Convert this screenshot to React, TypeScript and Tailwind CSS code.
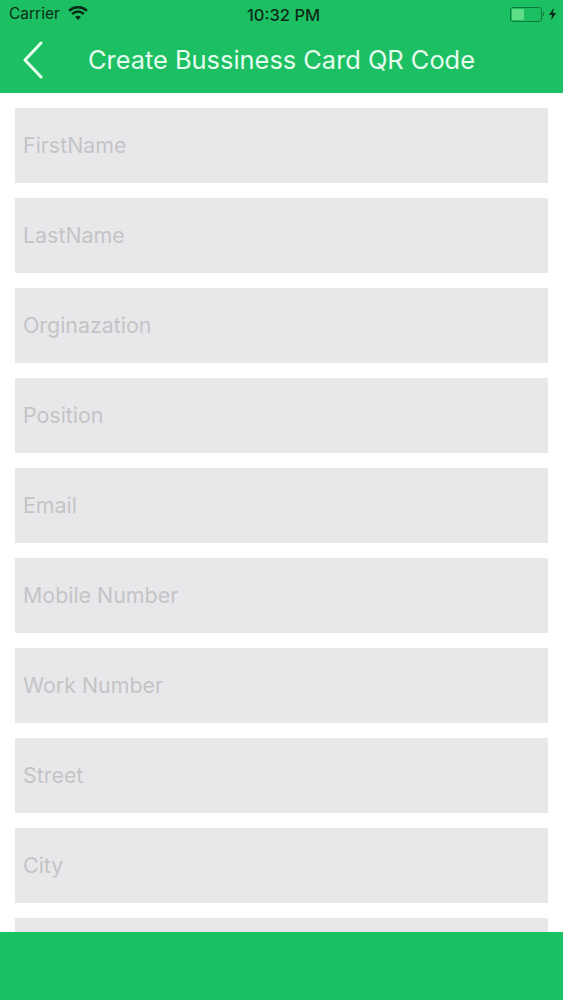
const fields = [
  "FirstName",
  "LastName",
  "Orginazation",
  "Position",
  "Email",
  "Mobile Number",
  "Work Number",
  "Street",
  "City",
  "",
]

function WifiIcon() {
  return (
    <svg width="20" height="15" viewBox="0 0 20 15" className="ml-[8px] mb-[1px]">
      <path d="M1 4.8 Q10 -2.6 19 4.8" fill="none" stroke="#0c2a18" strokeWidth="2.6" />
      <path d="M4.2 8 Q10 3 15.800 8" fill="none" stroke="#0c2a18" strokeWidth="2.6" />
      <path d="M7.200 11 Q10 8.500 12.800 11 L10 14 Z" fill="#0c2a18" />
    </svg>
  )
}

function BatteryIcon() {
  return (
    <div className="flex items-center">
      <div className="w-[32px] h-[15px] rounded-[3px] border border-[#0f7a3f] p-[1px]">
        <div className="w-[12px] h-full bg-[#5fdc86] rounded-[1px]" />
      </div>
      <div className="ml-[1px] w-[1px] h-[4px] bg-[#0f7a3f]" />
      <svg width="9" height="14" viewBox="0 0 10 14" className="ml-[4px]">
        <path d="M6.500 0 L1 8 H4.500 L3.500 14 L9 6 H5.500 Z" fill="#0c2a18" />
      </svg>
    </div>
  )
}

export default function App() {
  return (
    <div
      className="h-[1000px] flex flex-col bg-white overflow-hidden"
      style={{ fontFamily: "Inter, 'Liberation Sans', sans-serif" }}
    >
      {/* Header */}
      <header className="h-[93px] shrink-0 bg-[#1cc062]">
        <div className="relative h-[28px] flex items-center justify-between pl-[9px] pr-[6px]">
          <div className="flex items-center">
            <span className="text-[15.500px] text-[#0c2a18]">Carrier</span>
            <WifiIcon />
          </div>
          <span className="absolute left-[247px] top-[3px] text-[16.500px] font-medium text-[#0c2a18]">10:32 PM</span>
          <BatteryIcon />
        </div>
        <div className="flex items-center h-[65px] pb-[1px]">
          <svg width="24" height="38" viewBox="0 0 24 38" className="ml-[21px]">
            <path d="M20 2 L4 19 L20 36" fill="none" stroke="#eafff2" strokeWidth="3" strokeLinecap="round" strokeLinejoin="round" />
          </svg>
          <h1 className="ml-[43px] text-[25.400px] leading-none font-normal text-[#e6fbef] whitespace-nowrap">
            Create Bussiness Card QR Code
          </h1>
        </div>
      </header>

      {/* Form */}
      <main className="flex-1 min-h-0 overflow-hidden px-[15px] pt-[15px] flex flex-col gap-[15px]">
        {fields.map((name, i) => (
          <div key={i} className="h-[75px] shrink-0 bg-[#e8e8ea] flex items-center px-[8px]">
            <span className="text-[21.400px] text-[#c4c4c7]">{name}</span>
          </div>
        ))}
      </main>

      {/* Bottom bar */}
      <footer className="h-[68px] shrink-0 bg-[#19c162]" />
    </div>
  )
}
